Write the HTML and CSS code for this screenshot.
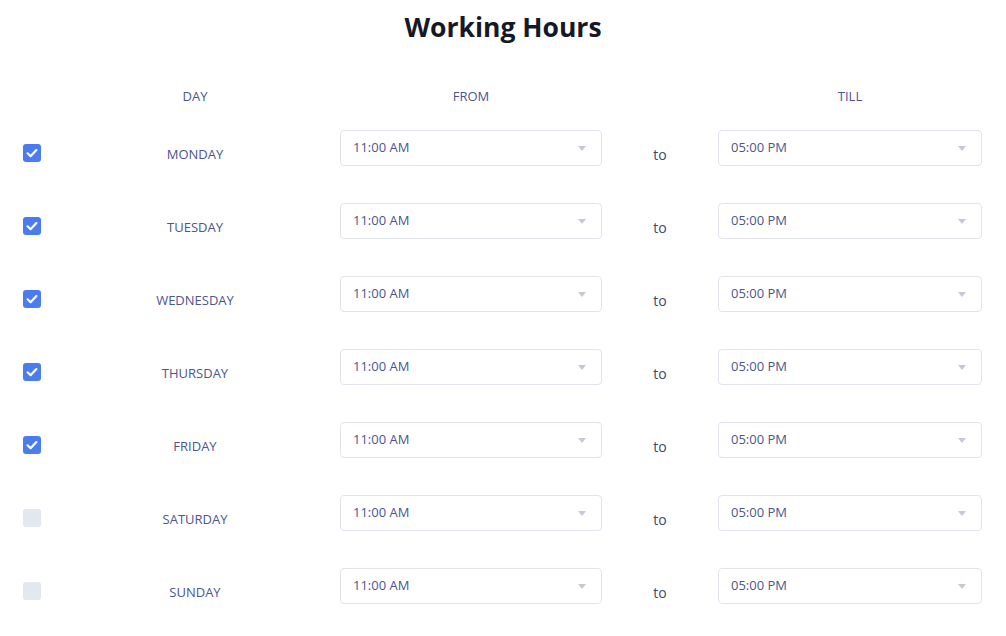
FILE: index.html
```html
<!DOCTYPE html>
<html lang="en">
<head>
  <meta charset="UTF-8" />
  <meta name="viewport" content="width=device-width, initial-scale=1.0" />
  <title>Working Hours</title>
  <link rel="stylesheet" href="styles.css">
</head>
<body>
  <h1>Working Hours</h1>
  <div class="hours">
    <div class="head">
      <span></span>
      <span class="day">DAY</span>
      <span class="from">FROM</span>
      <span></span>
      <span class="till">TILL</span>
    </div>
    <div id="rows"></div>
  </div>
  <script>
    const days = [
      { name: 'MONDAY', on: true },
      { name: 'TUESDAY', on: true },
      { name: 'WEDNESDAY', on: true },
      { name: 'THURSDAY', on: true },
      { name: 'FRIDAY', on: true },
      { name: 'SATURDAY', on: false },
      { name: 'SUNDAY', on: false }
    ];

    const check = '<svg width="18" height="18" viewBox="0 0 18 18"><path d="M4.6 9.3l3 2.9 5.8-6.1" fill="none" stroke="#fff" stroke-width="2.2" stroke-linecap="round" stroke-linejoin="round"/></svg>';

    function select(value) {
      return `<div class="select"><span>${value}</span><i class="caret"></i></div>`;
    }

    const rows = document.getElementById('rows');
    rows.innerHTML = days.map(d => `
      <div class="row">
        <span class="box ${d.on ? 'checked' : ''}">${d.on ? check : ''}</span>
        <span class="day">${d.name}</span>
        ${select('11:00 AM')}
        <span class="to">to</span>
        ${select('05:00 PM')}
      </div>`).join('');
  </script>
</body>
</html>
```

FILE: styles.css
```css
body {
  margin: 0;
  font-family: 'Open Sans', sans-serif;
  background: #fff;
  color: #4b5590;
}
h1 {
  margin: 9px 0 0;
  font-size: 26.5px;
  line-height: 36px;
  font-weight: 700;
  text-align: center;
  color: #141827;
}
.hours {
  padding: 0 24px 0 23px;
}
.head, .row {
  display: grid;
  grid-template-columns: 42px 275px 262px 116px 264px;
  align-items: center;
}
.head {
  margin-top: 41px;
  margin-bottom: 24px;
  font-size: 13px;
  line-height: 20px;
}
.day {
  text-align: center;
  padding-right: 15px;
  font-size: 13px;
}
.from, .till {
  text-align: center;
}
.row {
  height: 48px;
  margin-bottom: 25px;
}
.box {
  width: 18px;
  height: 18px;
  margin-top: -2px;
  border-radius: 3px;
  background: #e2e8f0;
  display: flex;
}
.box.checked {
  background: #4a7cf0;
}
.select {
  align-self: start;
  height: 36px;
  box-sizing: border-box;
  border: 1px solid #e1e4ee;
  border-radius: 4px;
  padding: 0 15px 0 12px;
  display: flex;
  align-items: center;
  justify-content: space-between;
  font-size: 13px;
  color: #4b5590;
}
.select span {
  margin-top: -3px;
}
.caret {
  width: 0;
  height: 0;
  border-left: 4px solid transparent;
  border-right: 4px solid transparent;
  border-top: 5px solid #c5c9d6;
}
.to {
  text-align: center;
  font-size: 14px;
  color: #3d4a6e;
}
```
